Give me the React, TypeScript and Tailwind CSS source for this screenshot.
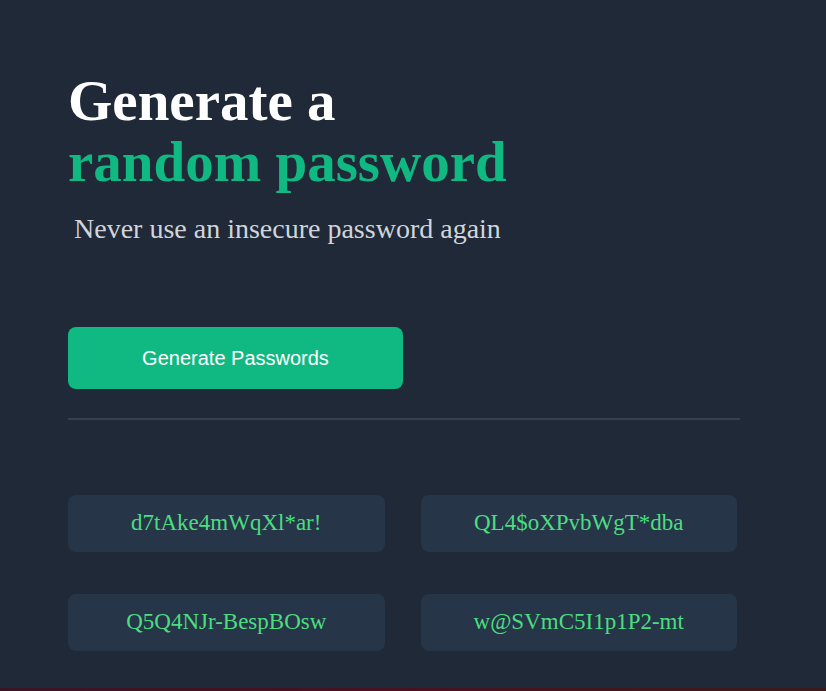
import React from "react";

const passwords = [
  "d7tAke4mWqXl*ar!",
  "QL4$oXPvbWgT*dba",
  "Q5Q4NJr-BespBOsw",
  "w@SVmC5I1p1P2-mt",
];

export default function App() {
  return (
    <div className="relative min-h-[691px] w-full bg-[#1f2937] font-['Liberation_Serif',serif] overflow-hidden">
      <main className="flex flex-col pl-[68px] pt-[70px] w-[740px]">
        {/* Heading */}
        <h1 className="text-[57px] font-bold leading-[61px] text-white">
          Generate a
          <br />
          <span className="text-[#10b981]">random password</span>
        </h1>
        <p className="mt-[19px] ml-[6px] text-[28px] leading-[36px] text-[#d1d5db]">
          Never use an insecure password again
        </p>

        {/* Action */}
        <button className="mt-[80px] w-[335px] h-[62px] rounded-lg bg-[#10b981] text-white text-[20px] font-['Liberation_Sans',sans-serif] cursor-pointer">
          Generate Passwords
        </button>

        <hr className="mt-[29px] border-t-2 border-[#364150]" />

        {/* Results */}
        <div className="mt-[75px] grid grid-cols-2 gap-x-[36px] gap-y-[42px] w-[669px]">
          {passwords.map((pw) => (
            <div
              key={pw}
              className="h-[57px] rounded-lg bg-[#273549] flex items-center justify-center text-[23px] text-[#4ade80]"
            >
              {pw}
            </div>
          ))}
        </div>
      </main>
      <div className="absolute bottom-0 left-0 right-0 h-[3px] bg-gradient-to-r from-[#3b1424] via-[#4a1020] to-[#3a1a1a]" />
    </div>
  );
}
